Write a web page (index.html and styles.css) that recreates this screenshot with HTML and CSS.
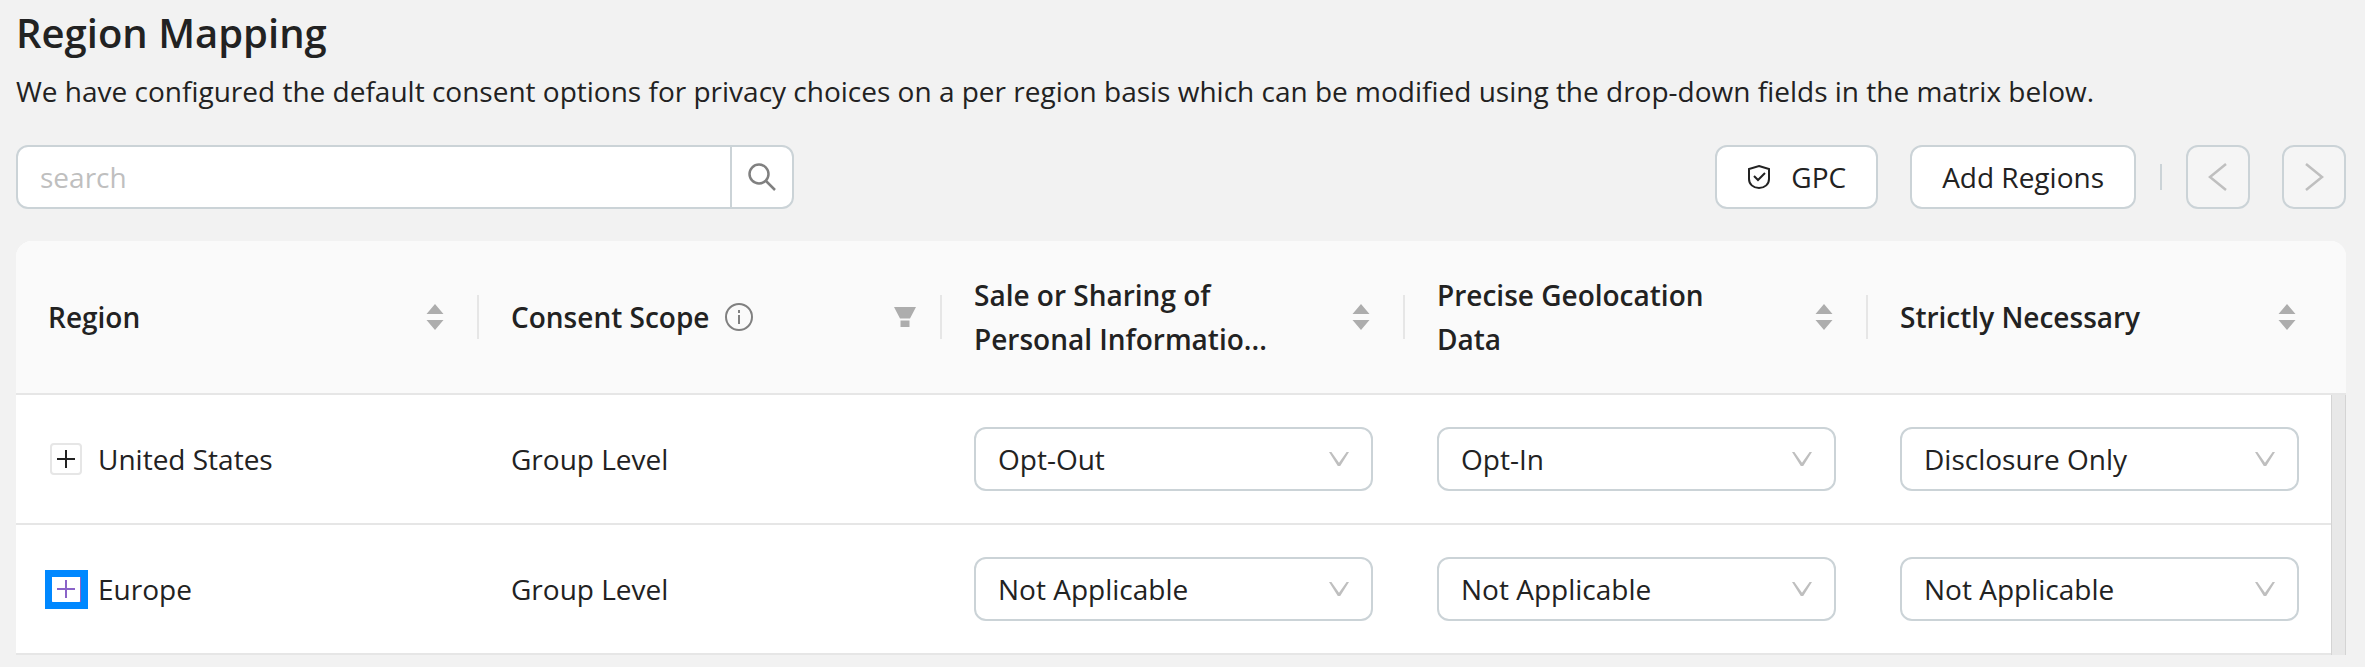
FILE: index.html
```html
<!DOCTYPE html>
<html lang="en">
<head>
    <meta charset="UTF-8">
    <meta name="viewport" content="width=device-width, initial-scale=1.0">
    <title>Region Mapping</title>
    <link rel="stylesheet" href="styles.css">
</head>
<body>
    <!-- Shared icons -->
    <svg class="icon-defs" aria-hidden="true">
        <symbol id="icon-sort" viewBox="0 0 18 26">
            <path d="M9 0l8.500 10h-17zM9 26l8.500-10h-17z" fill="currentColor"/>
        </symbol>
        <symbol id="icon-plus" viewBox="0 0 18 18">
            <path d="M9 0v18M0 9h18" fill="none" stroke="currentColor" stroke-width="2"/>
        </symbol>
    </svg>

    <main class="page">
        <h1>Region Mapping</h1>
        <p class="description">We have configured the default consent options for privacy choices on a per region basis which can be modified using the drop-down fields in the matrix below.</p>

        <div class="toolbar">
            <form class="search" role="search">
                <input type="text" id="search-input" placeholder="search" aria-label="Search">
                <button type="button" class="search-btn" aria-label="Search">
                    <svg width="28" height="28" viewBox="0 0 28 28" fill="none" stroke="currentColor" stroke-width="2.500">
                        <circle cx="11" cy="11" r="9.500"/>
                        <path d="M17.500 17.500l9.500 9.500"/>
                    </svg>
                </button>
            </form>
            <div class="actions">
                <button type="button" class="btn">
                    <svg width="24" height="26" viewBox="0 0 24 26" fill="none" stroke="currentColor" stroke-width="2">
                        <path d="M12 2L22 5V15C22 20 18 24 12 24S2 20 2 15V5Z"/>
                        <path d="M7 12l4 4 7-7"/>
                    </svg>
                    GPC
                </button>
                <button type="button" class="btn">Add Regions</button>
                <span class="divider"></span>
                <button type="button" class="btn btn-nav" aria-label="Previous" disabled>
                    <svg width="20" height="28" viewBox="0 0 20 28" fill="none" stroke="currentColor" stroke-width="2.500">
                        <path d="M18 1L2 14l16 13"/>
                    </svg>
                </button>
                <button type="button" class="btn btn-nav" aria-label="Next" disabled>
                    <svg width="20" height="28" viewBox="0 0 20 28" fill="none" stroke="currentColor" stroke-width="2.500">
                        <path d="M2 1l16 13L2 27"/>
                    </svg>
                </button>
            </div>
        </div>

        <table class="matrix">
            <colgroup>
                <col><col><col><col><col>
                <col class="scroll-col">
            </colgroup>
            <thead>
                <tr>
                    <th scope="col">
                        <div class="head">
                            <span class="head-title">Region</span>
                            <svg class="sort" width="18" height="26"><use href="#icon-sort"/></svg>
                        </div>
                    </th>
                    <th scope="col">
                        <div class="head">
                            <span class="head-title">Consent Scope</span>
                            <svg class="info" width="28" height="28" viewBox="0 0 28 28" fill="none" stroke="currentColor" stroke-width="2">
                                <circle cx="14" cy="14" r="13"/>
                                <path d="M14 12v9M14 7v3"/>
                            </svg>
                            <svg class="filter" width="22" height="20" viewBox="0 0 22 20" fill="currentColor">
                                <path d="M0 0h22l-6 11.500H6zM6.500 13.500h9v6.500h-9z"/>
                            </svg>
                        </div>
                    </th>
                    <th scope="col">
                        <div class="head">
                            <span class="head-title">Sale or Sharing of Personal Informatio...</span>
                            <svg class="sort" width="18" height="26"><use href="#icon-sort"/></svg>
                        </div>
                    </th>
                    <th scope="col">
                        <div class="head">
                            <span class="head-title">Precise Geolocation Data</span>
                            <svg class="sort" width="18" height="26"><use href="#icon-sort"/></svg>
                        </div>
                    </th>
                    <th scope="col">
                        <div class="head">
                            <span class="head-title">Strictly Necessary</span>
                            <svg class="sort" width="18" height="26"><use href="#icon-sort"/></svg>
                        </div>
                    </th>
                    <td class="scroll-head"></td>
                </tr>
            </thead>
            <tbody>
                <tr>
                    <td>
                        <div class="region">
                            <button type="button" class="expand" aria-label="Expand United States">
                                <svg width="18" height="18"><use href="#icon-plus"/></svg>
                            </button>
                            United States
                        </div>
                    </td>
                    <td>Group Level</td>
                    <td>
                        <div class="select">
                            <select aria-label="United States: Sale or Sharing of Personal Information">
                                <option>Opt-Out</option>
                                <option>Opt-In</option>
                                <option>Disclosure Only</option>
                                <option>Not Applicable</option>
                            </select>
                        </div>
                    </td>
                    <td>
                        <div class="select">
                            <select aria-label="United States: Precise Geolocation Data">
                                <option>Opt-Out</option>
                                <option selected>Opt-In</option>
                                <option>Disclosure Only</option>
                                <option>Not Applicable</option>
                            </select>
                        </div>
                    </td>
                    <td>
                        <div class="select">
                            <select aria-label="United States: Strictly Necessary">
                                <option>Opt-Out</option>
                                <option>Opt-In</option>
                                <option selected>Disclosure Only</option>
                                <option>Not Applicable</option>
                            </select>
                        </div>
                    </td>
                    <td class="scroll-track" rowspan="2"></td>
                </tr>
                <tr>
                    <td>
                        <div class="region">
                            <button type="button" class="expand active" aria-label="Expand Europe">
                                <svg width="18" height="18"><use href="#icon-plus"/></svg>
                            </button>
                            Europe
                        </div>
                    </td>
                    <td>Group Level</td>
                    <td>
                        <div class="select">
                            <select aria-label="Europe: Sale or Sharing of Personal Information">
                                <option>Opt-Out</option>
                                <option>Opt-In</option>
                                <option>Disclosure Only</option>
                                <option selected>Not Applicable</option>
                            </select>
                        </div>
                    </td>
                    <td>
                        <div class="select">
                            <select aria-label="Europe: Precise Geolocation Data">
                                <option>Opt-Out</option>
                                <option>Opt-In</option>
                                <option>Disclosure Only</option>
                                <option selected>Not Applicable</option>
                            </select>
                        </div>
                    </td>
                    <td>
                        <div class="select">
                            <select aria-label="Europe: Strictly Necessary">
                                <option>Opt-Out</option>
                                <option>Opt-In</option>
                                <option>Disclosure Only</option>
                                <option selected>Not Applicable</option>
                            </select>
                        </div>
                    </td>
                </tr>
            </tbody>
        </table>
    </main>
</body>
</html>
```
FILE: styles.css
```css
* {
    box-sizing: border-box;
}
body {
    margin: 0;
    background-color: #f2f2f2;
    color: #222;
    font-family: 'Open Sans', 'Noto Sans', sans-serif;
    font-size: 28px;
    line-height: 44px;
}
button, input, select {
    font: inherit;
    color: inherit;
}
svg {
    flex: none;
    display: block;
}
.icon-defs {
    position: absolute;
    width: 0;
    height: 0;
}
.page {
    padding: 3px 19px 12px 16px;
}
h1 {
    margin: 0 0 6px;
    font-size: 40px;
    font-weight: 600;
    line-height: 60px;
}
.description {
    margin: 0 0 32px;
}

/* Toolbar */
.toolbar {
    display: flex;
    justify-content: space-between;
    align-items: center;
    margin-bottom: 32px;
}
.search {
    display: flex;
    width: 33.4%;
    height: 64px;
    background-color: white;
    border: 2px solid #cbd3d7;
    border-radius: 12px;
    overflow: hidden;
}
.search input {
    flex: 1;
    min-width: 0;
    padding: 0 22px;
    border: none;
    outline: none;
    background: none;
}
.search input::placeholder {
    color: #bfbfbf;
}
.search-btn {
    display: flex;
    align-items: center;
    justify-content: center;
    width: 62px;
    padding: 0;
    background: none;
    border: none;
    border-left: 2px solid #cbd3d7;
    color: #808080;
    cursor: pointer;
}
.actions {
    display: flex;
    align-items: center;
    gap: 32px;
}
.btn {
    display: flex;
    align-items: center;
    justify-content: center;
    gap: 20px;
    height: 64px;
    padding: 0 30px;
    background-color: white;
    border: 2px solid #cbd3d7;
    border-radius: 12px;
    cursor: pointer;
}
.btn-nav {
    width: 64px;
    padding: 0;
    background-color: #f5f5f5;
    color: #bfbfbf;
    cursor: not-allowed;
}
.divider {
    width: 2px;
    height: 26px;
    margin: 0 -8px;
    background-color: #cbd3d7;
}

/* Matrix */
.matrix {
    width: 100%;
    table-layout: fixed;
    border-collapse: separate;
    border-spacing: 0;
    background-color: white;
    border-radius: 16px 16px 0 0;
}
.scroll-col {
    width: 15px;
}
.matrix th,
.matrix td {
    padding: 32px;
    border-bottom: 2px solid #e6e6e6;
    text-align: left;
}
.matrix thead th,
.matrix .scroll-head {
    background-color: #fafafa;
    font-weight: 600;
}
.matrix thead th {
    position: relative;
}
.matrix thead th:first-child {
    border-top-left-radius: 16px;
}
.matrix .scroll-head {
    padding: 0;
    border-top-right-radius: 16px;
}
.matrix .scroll-track {
    padding: 0;
    background-color: #e8e8e8;
    border: 1px solid #d4d4d4;
    border-width: 0 1px;
}
/* Column separators */
.matrix thead th:not(:nth-child(5))::after {
    content: '';
    position: absolute;
    top: 50%;
    right: 0;
    width: 2px;
    height: 44px;
    margin-top: -22px;
    background-color: #e6e6e6;
}
.head {
    display: flex;
    align-items: center;
    min-height: 88px;
}
.head-title {
    max-width: 300px;
}
.info {
    margin-left: 16px;
    color: #808080;
}
.sort,
.filter {
    margin-left: auto;
    margin-right: 3px;
    color: #adadad;
}
.filter {
    margin-right: -6px;
}
.region {
    display: flex;
    align-items: center;
    gap: 16px;
    padding-left: 2px;
}
.expand {
    position: relative;
    display: flex;
    align-items: center;
    justify-content: center;
    width: 32px;
    height: 32px;
    padding: 0;
    background-color: white;
    border: 2px solid #e6e6e6;
    border-radius: 4px;
    cursor: pointer;
}
.expand.active {
    border-color: #8a63c8;
    color: #8a63c8;
}
.expand.active::after {
    content: '';
    position: absolute;
    inset: -5px -8px -6px -7px;
    border: 7px solid #0088ff;
}
.select {
    position: relative;
}
.select select {
    display: block;
    width: 100%;
    height: 64px;
    padding: 0 56px 0 22px;
    appearance: none;
    background-color: white;
    border: 2px solid #cbd3d7;
    border-radius: 12px;
    cursor: pointer;
}
.select::after {
    content: '';
    position: absolute;
    top: 25px;
    right: 24px;
    width: 20px;
    height: 14px;
    background-color: #bfbfbf;
    clip-path: polygon(0 0, 12% 0, 50% 77%, 88% 0, 100% 0, 56% 100%, 44% 100%);
    pointer-events: none;
}
```
